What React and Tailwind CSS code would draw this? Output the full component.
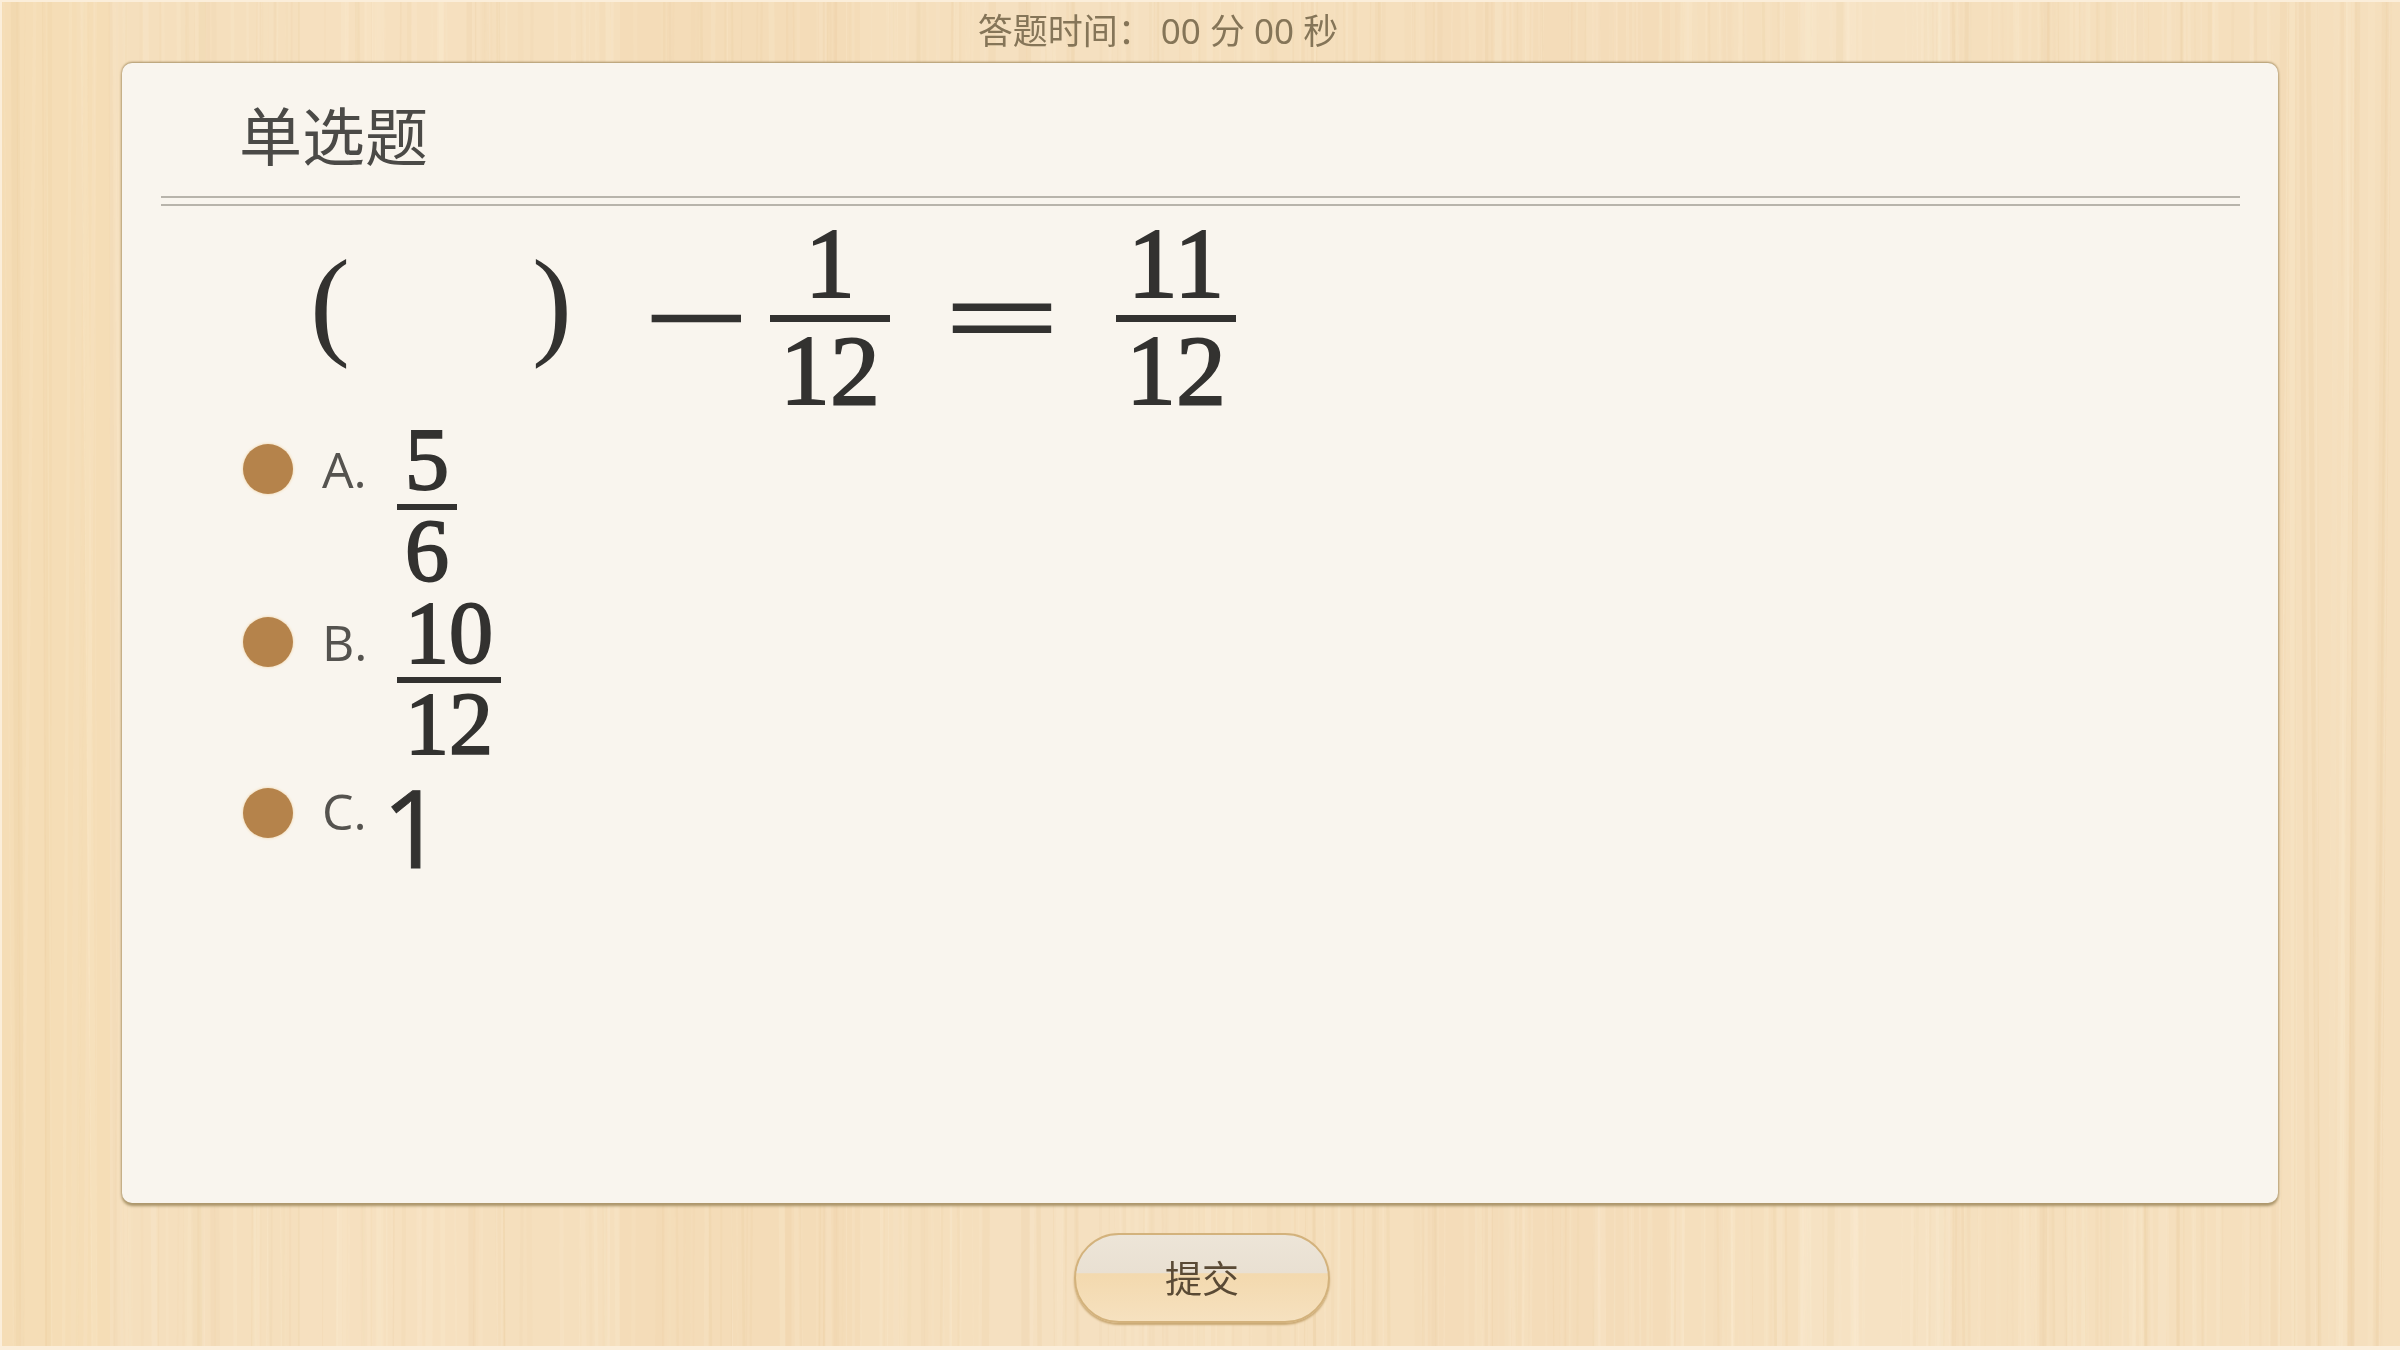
import React from 'react'

const CJK = 'font-["Noto_Sans","Noto_Sans_CJK_SC",sans-serif]'
const MATH = 'font-["Liberation_Serif",serif]'

// seeded so the grain comes out the same on every load
const makeGrain = () => {
  let seed = 7
  const rand = () => {
    seed = (seed * 16807) % 2147483647
    return seed / 2147483647
  }
  const lines = []
  for (let i = 0; i < 420; i++) {
    const x = rand() * 2400
    const light = rand() > 0.42
    lines.push({
      x,
      drift: (rand() - 0.5) * 26,
      width: 1 + rand() * rand() * 9,
      opacity: 0.04 + rand() * 0.16,
      color: light ? '#fff3dc' : '#e9c999',
    })
  }
  return lines
}
const grain = makeGrain()

const bands = [
  [0, 110, '#f5dcb3', 0.7],
  [300, 180, '#f7e2c2', 0.5],
  [620, 240, '#f3d9b4', 0.5],
  [980, 200, '#f6e2c4', 0.5],
  [1420, 260, '#f3dab5', 0.5],
  [1800, 150, '#f8e6c9', 0.5],
  [2150, 250, '#f6e0bd', 0.5],
]

const WoodGrain = () => (
  <svg className="absolute inset-0 w-full h-full" viewBox="0 0 2400 1350" preserveAspectRatio="none">
    <rect width="2400" height="1350" fill="#f5dfbd" />
    {bands.map(([x, w, c, o]) => (
      <rect key={x} x={x} width={w} height="1350" fill={c} opacity={o} />
    ))}
    {grain.map((l, i) => (
      <line key={i} x1={l.x} y1="0" x2={l.x + l.drift} y2="1350" stroke={l.color} strokeWidth={l.width} opacity={l.opacity} />
    ))}
  </svg>
)

const Fraction = ({ top, bottom, big }) => (
  <div className={`flex flex-col items-center ${MATH} text-[#333230] [-webkit-text-stroke:2px_#333230] ${big ? 'text-[100px] w-[120px]' : 'text-[88px] px-[8px]'}`}>
    <div className={big ? 'h-[80px] leading-[80px]' : 'h-[72px] leading-[72px]'}>{top}</div>
    <div className={big ? 'w-full h-[7px] mt-[11px] mb-[9px] bg-[#333230]' : 'w-[calc(100%+16px)] -mx-[8px] h-[6px] mt-[8px] mb-[5px] bg-[#333230]'}></div>
    <div className={big ? 'h-[80px] leading-[80px]' : 'h-[72px] leading-[72px]'}>{bottom}</div>
  </div>
)

const Option = ({ label, children, className, labelClass }) => (
  <div className={`flex items-start ${className}`}>
    <div className="w-[50px] h-[50px] mt-[20px] rounded-full bg-[#b5834b] shadow-[0_0_3px_#efcf9c]"></div>
    <div className={`ml-[29px] w-[61px] h-[60px] leading-[60px] text-[50px] text-[#55534f] font-["Open_Sans",sans-serif] ${labelClass}`}>{label}</div>
    {children}
  </div>
)

const App = () => {
  return (
    <div className={`relative w-[2400px] h-[1350px] overflow-hidden blur-[0.7px] ${CJK}`}>
      <WoodGrain />
      <div className="relative h-full box-border border-t-2 border-l-2 border-b-4 border-[#fbeeda]">
        <div className="h-[59px] flex items-center justify-center pr-[86px] text-[35px] text-[#857558]">
          <span>答题时间：</span>
          <span className="ml-[8px]">00 分 00 秒</span>
        </div>

        <div className="mt-[2px] ml-[120px] w-[2156px] h-[1140px] rounded-[10px] bg-[#f9f5ee] shadow-[0_-1px_2px_#b59e74,0_0_3px_#b59e74,0_3px_3px_#a89368]">
          <div className="h-[133px] pt-[14px] pl-[117px] flex items-center text-[63px] text-[#4b4a47]">单选题</div>
          <div className="ml-[39px] mr-[38px] h-[10px] border-y-2 border-[#b8b4ab]"></div>

          <div className={`mt-[18px] flex items-center h-[187px] ${MATH} text-[#333230]`}>
            <span className="ml-[188px] w-[32px] mb-[30px] text-[120px] leading-none">(</span>
            <span className="ml-[190px] w-[32px] mb-[30px] text-[120px] leading-none">)</span>
            <span className="ml-[87px] w-[90px] text-[110px] leading-none text-center scale-x-[1.68] [-webkit-text-stroke:2px_#333230]">−</span>
            <div className="ml-[29px]">
              <Fraction big top="1" bottom="12" />
            </div>
            <span className="ml-[62px] w-[100px] text-[110px] leading-none text-center scale-x-[1.85] [-webkit-text-stroke:2px_#333230]">=</span>
            <div className="ml-[64px]">
              <Fraction big top="11" bottom="12" />
            </div>
          </div>

          <div className="pl-[121px]">
            <Option label="A." className="mt-[13px]" labelClass="mt-[15px]">
              <div className="ml-[14px]">
                <Fraction top="5" bottom="6" />
              </div>
            </Option>
            <Option label="B." className="mt-[10px]" labelClass="mt-[15px]">
              <div className="ml-[14px]">
                <Fraction top="10" bottom="12" />
              </div>
            </Option>
            <Option label="C." className="mt-[8px]" labelClass="mt-[13px]">
              <div className={`mt-[9px] -ml-[1px] h-[100px] leading-[100px] text-[108px] text-[#333230] [-webkit-text-stroke:1px_#333230] font-["Open_Sans",sans-serif]`}>1</div>
            </Option>
          </div>
        </div>

        <div className="mt-[30px] flex justify-center pl-[2px]">
          <button className="w-[256px] h-[90px] pt-[2px] rounded-full border-2 border-[#d3b27c] bg-[linear-gradient(180deg,#ede5d8_0,#e9e0d2_44%,#f3d9ae_45%,#f6e1bf_100%)] shadow-[0_2px_2px_#c9a873] text-[37px] text-[#5a4a35]">
            提交
          </button>
        </div>
      </div>
    </div>
  )
}

export default App
